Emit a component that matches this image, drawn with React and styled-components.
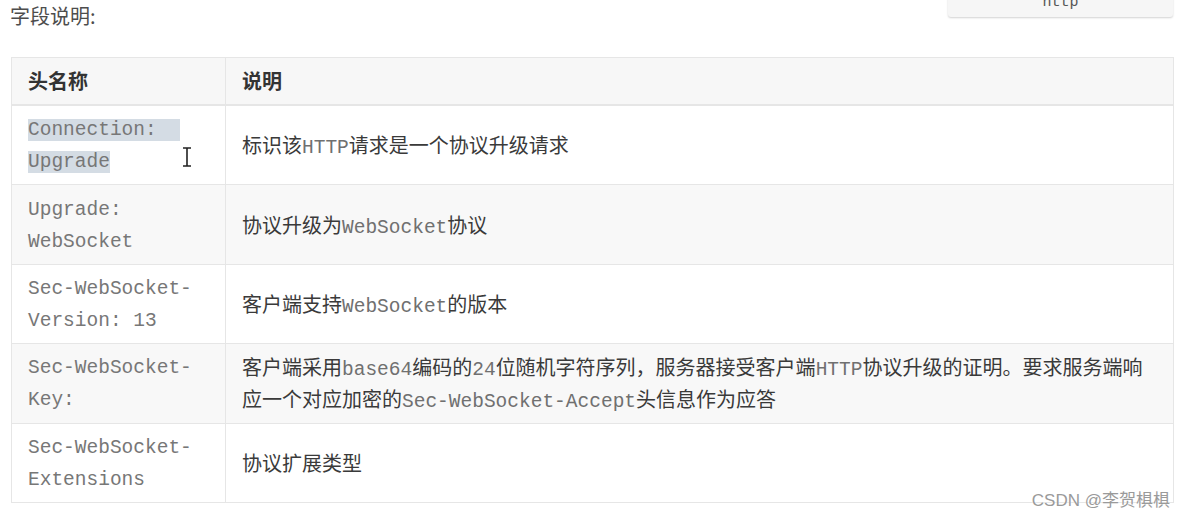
import React from 'react';
import styled, { createGlobalStyle } from 'styled-components';

const GlobalStyle = createGlobalStyle`
  html, body {
    margin: 0;
    padding: 0;
    background: #fff;
  }
  body {
    font-family: "Noto Sans CJK SC", "Noto Sans", sans-serif;
    color: #333;
    overflow: hidden;
  }
`;

const Page = styled.div`
  position: relative;
  width: 1186px;
  height: 523px;
  padding: 0 0 0 10px;
  box-sizing: border-box;
`;

const Heading = styled.p`
  margin: 0 0 25px;
  font-size: 20px;
  line-height: 32px;
  color: #4d4d4d;
`;

const FloatingCode = styled.div`
  position: absolute;
  top: -12px;
  left: 948px;
  width: 225px;
  height: 29px;
  background: #f6f6f6;
  border-radius: 3px;
  box-shadow: 0 1px 2px rgba(0, 0, 0, 0.18);
  display: flex;
  align-items: center;
  justify-content: center;
  font-family: "Liberation Mono", "DejaVu Sans Mono", monospace;
  font-size: 15px;
  color: #555;
`;

const Table = styled.table`
  margin-left: 1px;
  width: 1163px;
  border-collapse: collapse;
  table-layout: fixed;
  font-size: 20px;
  line-height: 32px;
`;

const HeadCell = styled.th`
  text-align: left;
  font-weight: 700;
  color: #333;
  background: #f7f7f7;
  border: 1px solid #e6e6e6;
  border-bottom-width: 2px;
  padding: 7px 16px;
  width: ${(p) => p.width || 'auto'};
  box-sizing: border-box;
`;

const Row = styled.tr`
  background: ${(p) => (p.striped ? '#f8f8f8' : '#fff')};
`;

const Cell = styled.td`
  position: relative;
  border: 1px solid #e6e6e6;
  padding: 7.2px 16px;
  height: 64px;
  vertical-align: middle;
  color: #3a3a3a;
`;

const Code = styled.span`
  font-family: "Liberation Mono", "Courier New", monospace;
  font-size: 19.5px;
  line-height: 1;
  vertical-align: ${(p) => (p.lift ? '2px' : 'baseline')};
  color: ${(p) => (p.lift ? '#777' : '#707070')};
`;

const Selected = styled.span`
  background: #d4dce4;
  padding-right: ${(p) => p.extra || '0px'};
`;

const Cursor = styled.svg`
  position: absolute;
  left: 170px;
  top: 41px;
`;

const Watermark = styled.div`
  position: absolute;
  right: 16px;
  bottom: 12px;
  font-family: "Liberation Sans", "Noto Sans CJK SC", sans-serif;
  font-size: 17px;
  color: #9a9a9a;
  text-shadow: 0 0 2px #fff;
`;

const rows = [
  {
    name: (
      <Code lift>
        <Selected extra="23px">Connection:</Selected>
        <br />
        <Selected>Upgrade</Selected>
      </Code>
    ),
    cursor: true,
    desc: (
      <>
        标识该<Code>HTTP</Code>请求是一个协议升级请求
      </>
    ),
  },
  {
    name: <Code lift>Upgrade: WebSocket</Code>,
    desc: (
      <>
        协议升级为<Code>WebSocket</Code>协议
      </>
    ),
  },
  {
    name: <Code lift>Sec-WebSocket-Version: 13</Code>,
    desc: (
      <>
        客户端支持<Code>WebSocket</Code>的版本
      </>
    ),
  },
  {
    name: <Code lift>Sec-WebSocket-Key:</Code>,
    desc: (
      <>
        客户端采用<Code>base64</Code>编码的<Code>24</Code>位随机字符序列，服务器接受客户端<Code>HTTP</Code>协议升级的证明。要求服务端响
        <br />
        应一个对应加密的<Code>Sec-WebSocket-Accept</Code>头信息作为应答
      </>
    ),
  },
  {
    name: <Code lift>Sec-WebSocket-Extensions</Code>,
    desc: <>协议扩展类型</>,
  },
];

const App = () => {
  return (
    <Page>
      <GlobalStyle />
      <FloatingCode>http</FloatingCode>
      <Heading>字段说明:</Heading>
      <Table>
        <thead>
          <tr>
            <HeadCell width="214px">头名称</HeadCell>
            <HeadCell>说明</HeadCell>
          </tr>
        </thead>
        <tbody>
          {rows.map((r, i) => (
            <Row key={i} striped={i % 2 === 1}>
              <Cell>
                {r.name}
                {r.cursor && (
                  <Cursor width="10" height="20" viewBox="0 0 10 20">
                    <path d="M1 1h8M5 1v18M1 19h8" stroke="#222" strokeWidth="1.6" fill="none" />
                  </Cursor>
                )}
              </Cell>
              <Cell>{r.desc}</Cell>
            </Row>
          ))}
        </tbody>
      </Table>
      <Watermark>CSDN @李贺椇椇</Watermark>
    </Page>
  );
};

export default App;
